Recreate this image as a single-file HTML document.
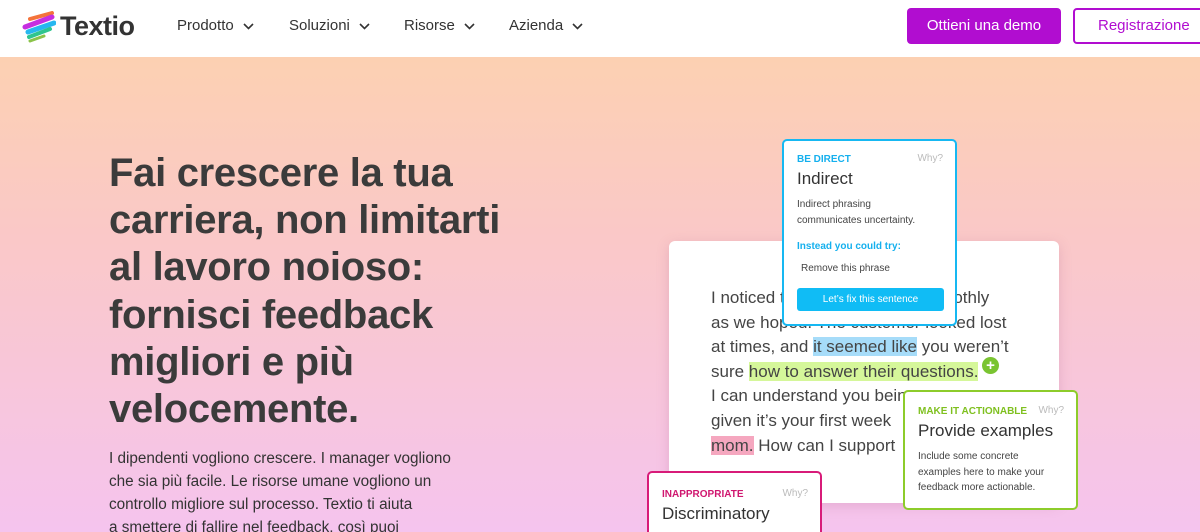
<!DOCTYPE html>
<html><head><meta charset="utf-8"><style>
*{margin:0;padding:0;box-sizing:border-box}
html,body{width:1200px;height:532px;overflow:hidden}
body{font-family:"Liberation Sans",sans-serif;position:relative;background:linear-gradient(180deg,#fdd3ab 0%,#fac8c8 45%,#f5c4ee 100%)}
.nav{position:absolute;left:0;top:0;width:1200px;height:57px;background:#fff}
.logo{position:absolute;left:60px;top:11px;font-size:27px;font-weight:bold;color:#333;letter-spacing:-0.5px}
.menu{position:absolute;top:17px;font-size:15px;color:#333}
.menu svg{margin-left:9px;vertical-align:middle}
.btn1{position:absolute;left:907px;top:8px;width:154px;height:36px;background:#b10dd0;border-radius:4px;color:#fff;font-size:15px;text-align:center;line-height:36px}
.btn2{position:absolute;left:1073px;top:8px;width:140px;height:36px;border:2px solid #b10dd0;border-radius:4px;color:#b10dd0;font-size:15px;line-height:32px;padding-left:23px}
h1{position:absolute;left:109px;top:150px;font-size:40px;line-height:47.2px;color:#3b3b3b;font-weight:bold;letter-spacing:-0.3px;white-space:nowrap}
.p{position:absolute;left:109px;top:447px;font-size:15.3px;line-height:23px;color:#333;white-space:nowrap}
.card{position:absolute;left:669px;top:241px;width:390px;height:262px;background:#fff;border-radius:6px;box-shadow:0 3px 12px rgba(180,100,140,.25)}
.ct{position:absolute;left:711px;top:286px;font-size:17px;line-height:24.6px;color:#444;white-space:nowrap}
.hb{background:#a6dcf9}.hg{background:#d5f79a}.hp{background:#f5a7bf}
.pop{position:absolute;background:#fff;border-radius:5px;border:2px solid}
.lab{font-size:10px;font-weight:bold;position:absolute;left:13px}
.why{position:absolute;right:12px;font-size:10px;color:#bbb}
.ttl{position:absolute;left:13px;font-size:17px;color:#333}
.sm{position:absolute;left:13px;font-size:10px;line-height:15.5px;color:#444}
</style></head><body>
<div class="nav">
<svg style="position:absolute;left:22px;top:11px" width="34" height="32" viewBox="0 0 34 32"><path d="M8 8 L30 2" stroke="#f4733b" stroke-width="4" stroke-linecap="round"/><path d="M3 16 L30 6" stroke="#c62ee0" stroke-width="5" stroke-linecap="round"/><path d="M6 21 L32 12" stroke="#27b7f0" stroke-width="5" stroke-linecap="round"/><path d="M7 26 L28 18" stroke="#2fc58f" stroke-width="4" stroke-linecap="round"/><path d="M8 30 L22 25" stroke="#8bc34a" stroke-width="3" stroke-linecap="round"/></svg>
<div class="logo">Textio</div>
<div class="menu" style="left:177px">Prodotto<svg width="11" height="7" viewBox="0 0 11 7"><path d="M1 1l4.5 4.5L10 1" fill="none" stroke="#333" stroke-width="1.6"/></svg></div>
<div class="menu" style="left:289px">Soluzioni<svg width="11" height="7" viewBox="0 0 11 7"><path d="M1 1l4.5 4.5L10 1" fill="none" stroke="#333" stroke-width="1.6"/></svg></div>
<div class="menu" style="left:404px">Risorse<svg width="11" height="7" viewBox="0 0 11 7"><path d="M1 1l4.5 4.5L10 1" fill="none" stroke="#333" stroke-width="1.6"/></svg></div>
<div class="menu" style="left:509px">Azienda<svg width="11" height="7" viewBox="0 0 11 7"><path d="M1 1l4.5 4.5L10 1" fill="none" stroke="#333" stroke-width="1.6"/></svg></div>
<div class="btn1">Ottieni una demo</div>
<div class="btn2">Registrazione</div>
</div>
<h1>Fai crescere la tua<br>carriera, non limitarti<br>al lavoro noioso:<br>fornisci feedback<br>migliori e più<br>velocemente.</h1>
<div class="p">I dipendenti vogliono crescere. I manager vogliono<br>che sia più facile. Le risorse umane vogliono un<br>controllo migliore sul processo. Textio ti aiuta<br>a smettere di fallire nel feedback, così puoi</div>
<div class="card"></div>
<div class="ct">I noticed things didn't go as smoothly<br>as we hoped. The customer looked lost<br>at times, and <span class="hb">it seemed like</span> you weren’t<br>sure <span class="hg">how to answer their questions.</span><br>I can understand you being nervous<br>given it’s your first week<br><span class="hp">mom.</span> How can I support</div>
<div style="position:absolute;left:982px;top:357px;width:17px;height:17px;border-radius:50%;background:#7ac431;color:#fff;font-weight:bold;font-size:15px;line-height:17px;text-align:center">+</div>
<div class="pop" style="left:782px;top:139px;width:175px;height:187px;border-color:#16b8f2">
<div class="lab" style="top:13px;color:#14b0ee">BE DIRECT</div><div class="why" style="top:12px">Why?</div>
<div class="ttl" style="top:28px">Indirect</div>
<div class="sm" style="top:56px">Indirect phrasing<br>communicates uncertainty.</div>
<div class="lab" style="top:100px;color:#14b0ee">Instead you could try:</div>
<div class="sm" style="top:120px;left:17px">Remove this phrase</div>
<div style="position:absolute;left:13px;top:147px;width:147px;height:23px;background:#10bcf5;border-radius:3px;color:#fff;font-size:10px;text-align:center;line-height:23px">Let’s fix this sentence</div>
</div>
<div class="pop" style="left:903px;top:390px;width:175px;height:120px;border-color:#8dcc2b">
<div class="lab" style="top:14px;color:#7fc01f">MAKE IT ACTIONABLE</div><div class="why" style="top:13px">Why?</div>
<div class="ttl" style="top:29px">Provide examples</div>
<div class="sm" style="top:57px">Include some concrete<br>examples here to make your<br>feedback more actionable.</div>
</div>
<div class="pop" style="left:647px;top:471px;width:175px;height:80px;border-color:#d81b79">
<div class="lab" style="top:16px;color:#d0166f">INAPPROPRIATE</div><div class="why" style="top:15px">Why?</div>
<div class="ttl" style="top:31px">Discriminatory</div>
</div>
</body></html>
